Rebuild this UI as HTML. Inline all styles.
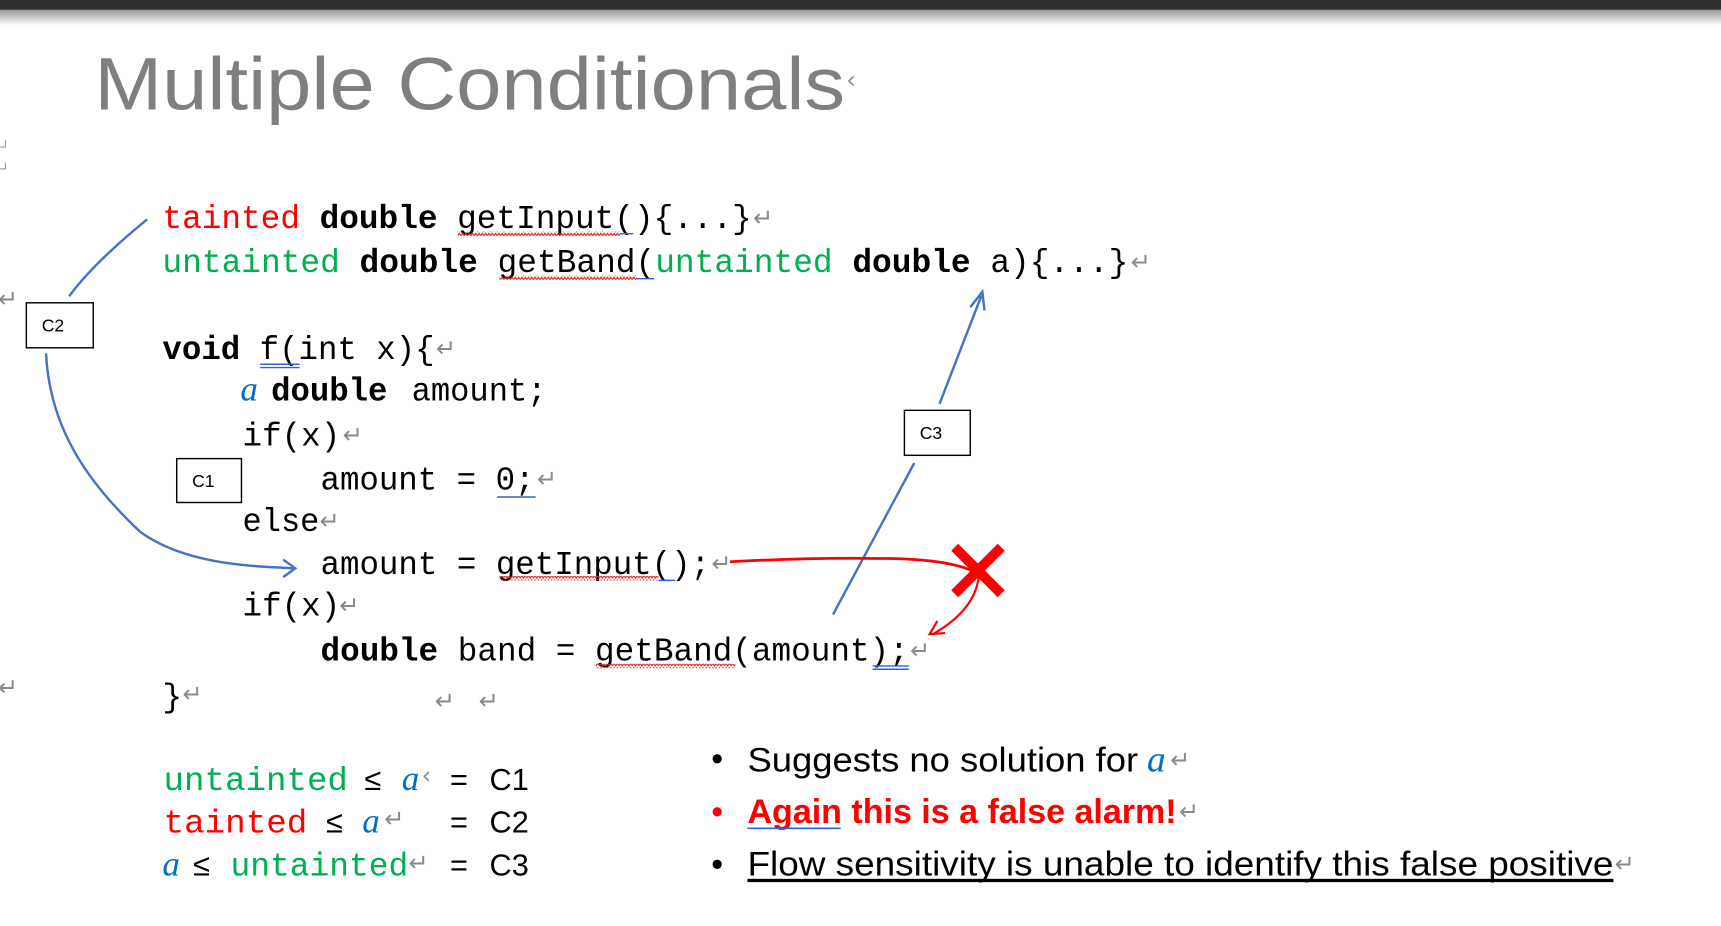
<!DOCTYPE html>
<html><head><meta charset="utf-8"><style>
html,body{margin:0;padding:0;background:#fff;width:1721px;height:926px;overflow:hidden}
svg{display:block}
.m{font-family:"Liberation Mono",monospace;font-size:30px}
.b{font-weight:bold}
.r{fill:#ff0000}.g{fill:#00b050}.bl{fill:#0070c0}.k{fill:#000}
.p{fill:#8a8a8a;font-family:"DejaVu Sans",sans-serif;font-size:22px}
.s{font-family:"Liberation Sans",sans-serif}
.ma{font-family:"Liberation Serif",serif;font-style:italic}
</style></head><body>
<svg width="1721" height="926" viewBox="0 0 1568 844" preserveAspectRatio="none" xmlns="http://www.w3.org/2000/svg">
<defs>
<linearGradient id="sh" x1="0" y1="0" x2="0" y2="1"><stop offset="0" stop-color="#999"/><stop offset="1" stop-color="#fff"/></linearGradient>
<pattern id="sq" width="6" height="4" patternUnits="userSpaceOnUse"><path d="M0 3 L1.5 0.5 L3 3 L4.5 0.5 L6 3" stroke="#e02020" stroke-width="1" fill="none"/></pattern>
</defs>
<rect x="0" y="0" width="1568" height="9" fill="#333130"/>
<rect x="0" y="9" width="1568" height="14" fill="url(#sh)"/>
<text x="86" y="100" class="s" font-size="68" fill="#7f7f7f" textLength="684" lengthAdjust="spacingAndGlyphs">Multiple Conditionals</text>
<text x="771" y="80" class="p" font-size="12">‹</text>
<!-- margin marks -->
<path d="M5 128v6h-5M5 148v6h-5" stroke="#999" fill="none"/>
<text x="-2" y="280" class="p" font-size="18">↵</text>
<text x="-2" y="634" class="p" font-size="18">↵</text>

<!-- code -->
<g class="m" xml:space="preserve">
<text x="148" y="208" textLength="537" lengthAdjust="spacingAndGlyphs"><tspan class="r">tainted</tspan> <tspan class="b">double</tspan> getInput(){...}</text>
<text x="686" y="206" class="p">↵</text>
<text x="148" y="248" textLength="880" lengthAdjust="spacingAndGlyphs"><tspan class="g">untainted</tspan> <tspan class="b">double</tspan> getBand(<tspan class="g">untainted</tspan> <tspan class="b">double</tspan> a){...}</text>
<text x="1030" y="246" class="p">↵</text>
<text x="148" y="327" textLength="248" lengthAdjust="spacingAndGlyphs"><tspan class="b">void</tspan> f(int x){</text>
<text x="397" y="325" class="p">↵</text>
<text x="219" y="365" class="ma bl" font-size="32">a</text>
<text x="247" y="365" class="b" textLength="106" lengthAdjust="spacingAndGlyphs">double</text>
<text x="375" y="365" textLength="123" lengthAdjust="spacingAndGlyphs">amount;</text>
<text x="221" y="406" textLength="89" lengthAdjust="spacingAndGlyphs">if(x)</text>
<text x="312" y="404" class="p">↵</text>
<text x="292" y="446" textLength="195" lengthAdjust="spacingAndGlyphs">amount = 0;</text>
<text x="489" y="444" class="p">↵</text>
<text x="221" y="484" textLength="70" lengthAdjust="spacingAndGlyphs">else</text>
<text x="291" y="482" class="p">↵</text>
<text x="292" y="523" textLength="355" lengthAdjust="spacingAndGlyphs">amount = getInput();</text>
<text x="648" y="521" class="p">↵</text>
<text x="221" y="561" textLength="89" lengthAdjust="spacingAndGlyphs">if(x)</text>
<text x="309" y="559" class="p">↵</text>
<text x="292" y="602" textLength="536" lengthAdjust="spacingAndGlyphs"><tspan class="b">double</tspan> band = getBand(amount);</text>
<text x="829" y="600" class="p">↵</text>
<text x="148" y="644">}</text>
<text x="166" y="640" class="p">↵</text>
<text x="396" y="646" class="p">↵</text>
<text x="436" y="646" class="p">↵</text>
</g>
<!-- squiggles -->
<rect x="417" y="211" width="148" height="4" fill="url(#sq)"/>
<rect x="455" y="251" width="125" height="4" fill="url(#sq)"/>
<rect x="455" y="525" width="145" height="4" fill="url(#sq)"/>
<rect x="543" y="605" width="127" height="4" fill="url(#sq)"/>
<g stroke="#3060d0" stroke-width="1.3">
<path d="M565 213h12M580 254h16M237 332h36M237 335h36M453 453h35M600 529h15M795 607h33M795 610h33"/>
</g>

<!-- boxes -->
<g fill="#fff" stroke="#000" stroke-width="1.3">
<rect x="24" y="276" width="61" height="41"/>
<rect x="161" y="418" width="59" height="40"/>
<rect x="824" y="374" width="60" height="41"/>
</g>
<g class="s" font-size="16" fill="#000">
<text x="38" y="302">C2</text><text x="175" y="444">C1</text><text x="838" y="400">C3</text>
</g>

<!-- blue arrows -->
<g stroke="#4472c4" stroke-width="2.2" fill="none">
<path d="M134 200 Q85 240 63 270"/>
<path d="M42 322 C45 390 80 440 128 485 C170 515 230 516 268 518"/>
<path d="M258 510 L269 518 L258 526"/>
<path d="M856 368 L894 270"/>
<path d="M884 280 L895 266 L897 283"/>
<path d="M833 422 L759 560"/>
</g>
<!-- red -->
<g stroke="#ff0000" fill="none">
<path d="M665 512 Q740 508 800 509 Q860 509 885 520" stroke-width="2.5"/>
<path d="M892 523 Q890 555 850 578" stroke-width="2"/>
<path d="M854 566 L847 578 L861 577" stroke-width="2"/>
<path d="M873 502 L909 538 M909 502 L873 538" stroke-width="9" stroke-linecap="square"/>
</g>

<!-- constraints -->
<g class="m" font-size="30" xml:space="preserve">
<text x="149" y="720" class="g" textLength="168" lengthAdjust="spacingAndGlyphs">untainted</text>
<text x="332" y="720" font-size="28" class="s">≤</text>
<text x="366" y="720" class="ma bl" font-size="32">a</text>
<text x="149" y="759" class="r" textLength="131" lengthAdjust="spacingAndGlyphs">tainted</text>
<text x="297" y="759" font-size="28" class="s">≤</text>
<text x="330" y="759" class="ma bl" font-size="32">a</text>
<text x="148" y="798" class="ma bl" font-size="32">a</text>
<text x="176" y="798" font-size="28" class="s">≤</text>
<text x="210" y="798" class="g" textLength="162" lengthAdjust="spacingAndGlyphs">untainted</text>
</g>
<text x="384" y="714" class="p" font-size="14">‹</text>
<text x="350" y="754" class="p" font-size="18">↵</text>
<text x="372" y="794" class="p" font-size="18">↵</text>
<g class="s" font-size="28">
<text x="410" y="720">=</text><text x="446" y="720">C1</text>
<text x="410" y="759">=</text><text x="446" y="759">C2</text>
<text x="410" y="798">=</text><text x="446" y="798">C3</text>
</g>

<!-- bullets -->
<g class="s" font-size="31">
<text x="648" y="702">•</text>
<text x="681" y="703" textLength="356" lengthAdjust="spacingAndGlyphs">Suggests no solution for</text>
<text x="1045" y="703" class="ma bl" font-size="34">a</text>
<text x="648" y="750" class="r">•</text>
<text x="681" y="750" class="r" font-weight="bold" textLength="391" lengthAdjust="spacingAndGlyphs">Again this is a false alarm!</text>
<text x="648" y="798">•</text>
<text x="681" y="798" textLength="789" lengthAdjust="spacingAndGlyphs">Flow sensitivity is unable to identify this false positive</text>
</g>
<text x="1066" y="700" class="p">↵</text>
<text x="1074" y="747" class="p">↵</text>
<text x="1471" y="795" class="p">↵</text>
<path d="M681 755h85" stroke="#3060d0" stroke-width="1.5"/>
<rect x="681" y="801" width="789" height="3" fill="#000"/>
</svg>
</body></html>
